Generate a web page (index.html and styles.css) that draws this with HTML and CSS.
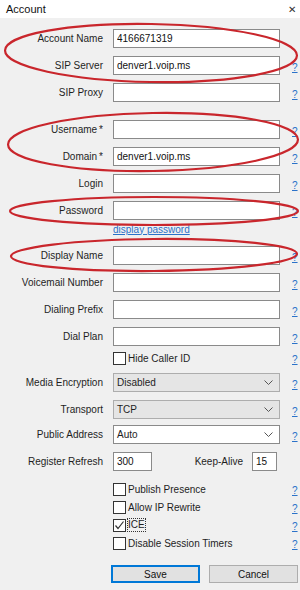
FILE: index.html
```html
<!doctype html>
<html>
    <head>
        <title>Account</title>
        <link rel="stylesheet" href="styles.css">
    </head>
    <body>
        <div class="titlebar">
            <span class="title">Account</span>
            <span class="close">&#x2715;</span>
        </div>

        <main class="form">
            <div class="row">
                <label>Account Name</label>
                <input class="field" type="text" value="4166671319">
                <span></span>
            </div>
            <div class="row">
                <label>SIP Server</label>
                <input class="field" type="text" value="denver1.voip.ms">
                <a class="help" href="#">?</a>
            </div>
            <div class="row">
                <label>SIP Proxy</label>
                <input class="field" type="text" value="">
                <a class="help" href="#">?</a>
            </div>

            <div class="row section">
                <label>Username<span class="req">*</span></label>
                <input class="field" type="text" value="">
                <a class="help" href="#">?</a>
            </div>
            <div class="row">
                <label>Domain<span class="req">*</span></label>
                <input class="field" type="text" value="denver1.voip.ms">
                <a class="help" href="#">?</a>
            </div>
            <div class="row">
                <label>Login</label>
                <input class="field" type="text" value="">
                <a class="help" href="#">?</a>
            </div>
            <div class="row">
                <label>Password</label>
                <input class="field" type="password" value="">
                <a class="help" href="#">?</a>
            </div>
            <div class="row link-row">
                <span></span>
                <a class="show-pass" href="#">display password</a>
                <span></span>
            </div>

            <div class="row after-link">
                <label>Display Name</label>
                <input class="field" type="text" value="">
                <a class="help" href="#">?</a>
            </div>
            <div class="row">
                <label>Voicemail Number</label>
                <input class="field" type="text" value="">
                <a class="help" href="#">?</a>
            </div>
            <div class="row">
                <label>Dialing Prefix</label>
                <input class="field" type="text" value="">
                <a class="help" href="#">?</a>
            </div>
            <div class="row">
                <label>Dial Plan</label>
                <input class="field" type="text" value="">
                <a class="help" href="#">?</a>
            </div>
            <div class="row check-row hide-id">
                <span></span>
                <div class="check"><span class="box"></span>Hide Caller ID</div>
                <a class="help" href="#">?</a>
            </div>

            <div class="row combo-first">
                <label>Media Encryption</label>
                <div class="combo">Disabled
                    <svg class="chev" width="9" height="5" viewBox="0 0 9 5"><polyline points="0.5,0.5 4.5,4.5 8.5,0.5" fill="none" stroke="#555" stroke-width="1"/></svg>
                </div>
                <a class="help" href="#">?</a>
            </div>
            <div class="row">
                <label>Transport</label>
                <div class="combo">TCP
                    <svg class="chev" width="9" height="5" viewBox="0 0 9 5"><polyline points="0.5,0.5 4.5,4.5 8.5,0.5" fill="none" stroke="#555" stroke-width="1"/></svg>
                </div>
                <a class="help" href="#">?</a>
            </div>
            <div class="row tight">
                <label>Public Address</label>
                <div class="combo editable">Auto
                    <svg class="chev" width="9" height="5" viewBox="0 0 9 5"><polyline points="0.5,0.5 4.5,4.5 8.5,0.5" fill="none" stroke="#555" stroke-width="1"/></svg>
                </div>
                <a class="help" href="#">?</a>
            </div>
            <div class="row">
                <label>Register Refresh</label>
                <div class="pair">
                    <input class="field small" type="text" value="300">
                    <span class="pair-label">Keep-Alive</span>
                    <input class="field tiny" type="text" value="15">
                </div>
                <span></span>
            </div>

            <div class="row check-row checks-first">
                <span></span>
                <div class="check"><span class="box"></span>Publish Presence</div>
                <a class="help" href="#">?</a>
            </div>
            <div class="row check-row">
                <span></span>
                <div class="check"><span class="box"></span>Allow IP Rewrite</div>
                <a class="help" href="#">?</a>
            </div>
            <div class="row check-row">
                <span></span>
                <div class="check"><span class="box checked"><svg width="11" height="11" viewBox="0 0 11 11"><polyline points="1.5,5.5 4,8.5 9.5,1.5" fill="none" stroke="#333" stroke-width="1.2"/></svg></span><span class="focus">ICE</span></div>
                <a class="help" href="#">?</a>
            </div>
            <div class="row check-row">
                <span></span>
                <div class="check"><span class="box"></span>Disable Session Timers</div>
                <a class="help" href="#">?</a>
            </div>

            <div class="buttons">
                <button class="btn default">Save</button>
                <button class="btn">Cancel</button>
            </div>
        </main>

        <!-- hand-drawn red marks over the screenshot -->
        <svg class="marks" width="300" height="590" viewBox="0 0 300 590">
            <ellipse cx="151" cy="53" rx="146" ry="29" transform="rotate(1 151 53)"/>
            <ellipse cx="153" cy="142" rx="145" ry="29" transform="rotate(-1 153 142)"/>
            <ellipse cx="154" cy="211" rx="144" ry="14"/>
            <ellipse cx="154" cy="255" rx="143" ry="16" transform="rotate(-0.5 154 255)"/>
        </svg>
    </body>
</html>
```

FILE: styles.css
```css
:root {
    font-family: 'Liberation Sans', Arial, sans-serif;
    font-size: 10px;

    --dialog-bg: #f0f0f0;
    --text: #1e1e1e;
    --field-border: #8a8a8a;
    --combo-bg: #e5e5e5;
    --combo-border: #adadad;
    --link: #2a72c9;
    --mark: #c9262c;

    --label-width: 103px;
    --field-width: 167px;
    --row-height: 19px;
}

body {
    margin: 0;
    width: 300px;
    height: 590px;
    background: var(--dialog-bg);
    color: var(--text);
    position: relative;
    overflow: hidden;
}

.titlebar {
    height: 18px;
    background: white;
    display: flex;
    align-items: center;
    justify-content: space-between;
    padding: 0 4px 0 6px;
}

.title {
    font-size: 11px;
    color: #111;
}

.close {
    font-size: 10px;
    color: #333;
}

.form {
    display: flex;
    flex-direction: column;
    padding-top: 11px;
}

.row {
    display: grid;
    grid-template-columns: var(--label-width) var(--field-width) 1fr;
    column-gap: 10px;
    align-items: center;
    height: var(--row-height);
    margin-top: 8px;
}

.row:first-child {
    margin-top: 0;
}

.row label {
    text-align: right;
    white-space: nowrap;
}

.req {
    margin-left: 2px;
}

.section {
    margin-top: 18px;
}

.field {
    all: unset;
    box-sizing: border-box;
    height: var(--row-height);
    width: 100%;
    background: white;
    border: 1px solid var(--field-border);
    padding: 0 3px;
    font-size: 10px;
    color: #111;
}

.help {
    color: var(--link);
    font-size: 10px;
    padding-left: 2px;
    padding-top: 3px;
}

.link-row {
    height: 14px;
    margin-top: 2px;
}

.show-pass {
    color: var(--link);
    font-size: 10px;
}

.after-link {
    margin-top: 10px;
}

.check-row {
    height: 14px;
}

.hide-id {
    margin-top: 5px;
}

.checks-first {
    margin-top: 11px;
}

.check-row + .check-row {
    margin-top: 4px;
}

.check {
    display: flex;
    align-items: center;
    gap: 2px;
    white-space: nowrap;
}

.box {
    box-sizing: border-box;
    width: 13px;
    height: 13px;
    border: 1px solid #333;
    background: white;
    display: flex;
    align-items: center;
    justify-content: center;
}

.focus {
    outline: 1px dotted #333;
    outline-offset: 0;
    line-height: 12px;
}

.combo-first {
    margin-top: 8px;
}

.combo {
    box-sizing: border-box;
    height: var(--row-height);
    background: var(--combo-bg);
    border: 1px solid var(--combo-border);
    display: flex;
    align-items: center;
    justify-content: space-between;
    padding: 0 6px 0 3px;
}

.combo.editable {
    background: white;
    border-color: var(--field-border);
}

.tight {
    margin-top: 6px;
}

.pair {
    display: flex;
    align-items: center;
    padding-right: 3px;
}

.field.small {
    width: 39px;
}

.pair-label {
    margin-left: auto;
    margin-right: 9px;
}

.field.tiny {
    width: 25px;
}

.buttons {
    display: flex;
    gap: 9px;
    padding-left: 111px;
    margin-top: 15px;
}

.btn {
    all: unset;
    box-sizing: border-box;
    width: 89px;
    height: 18px;
    background: #e1e1e1;
    border: 1px solid #adadad;
    text-align: center;
    font-size: 10px;
    color: #111;
}

.btn.default {
    border: 2px solid #0078d7;
}

.marks {
    position: absolute;
    left: 0;
    top: 0;
    pointer-events: none;
}

.marks ellipse {
    fill: none;
    stroke: var(--mark);
    stroke-width: 2.2;
}
```
